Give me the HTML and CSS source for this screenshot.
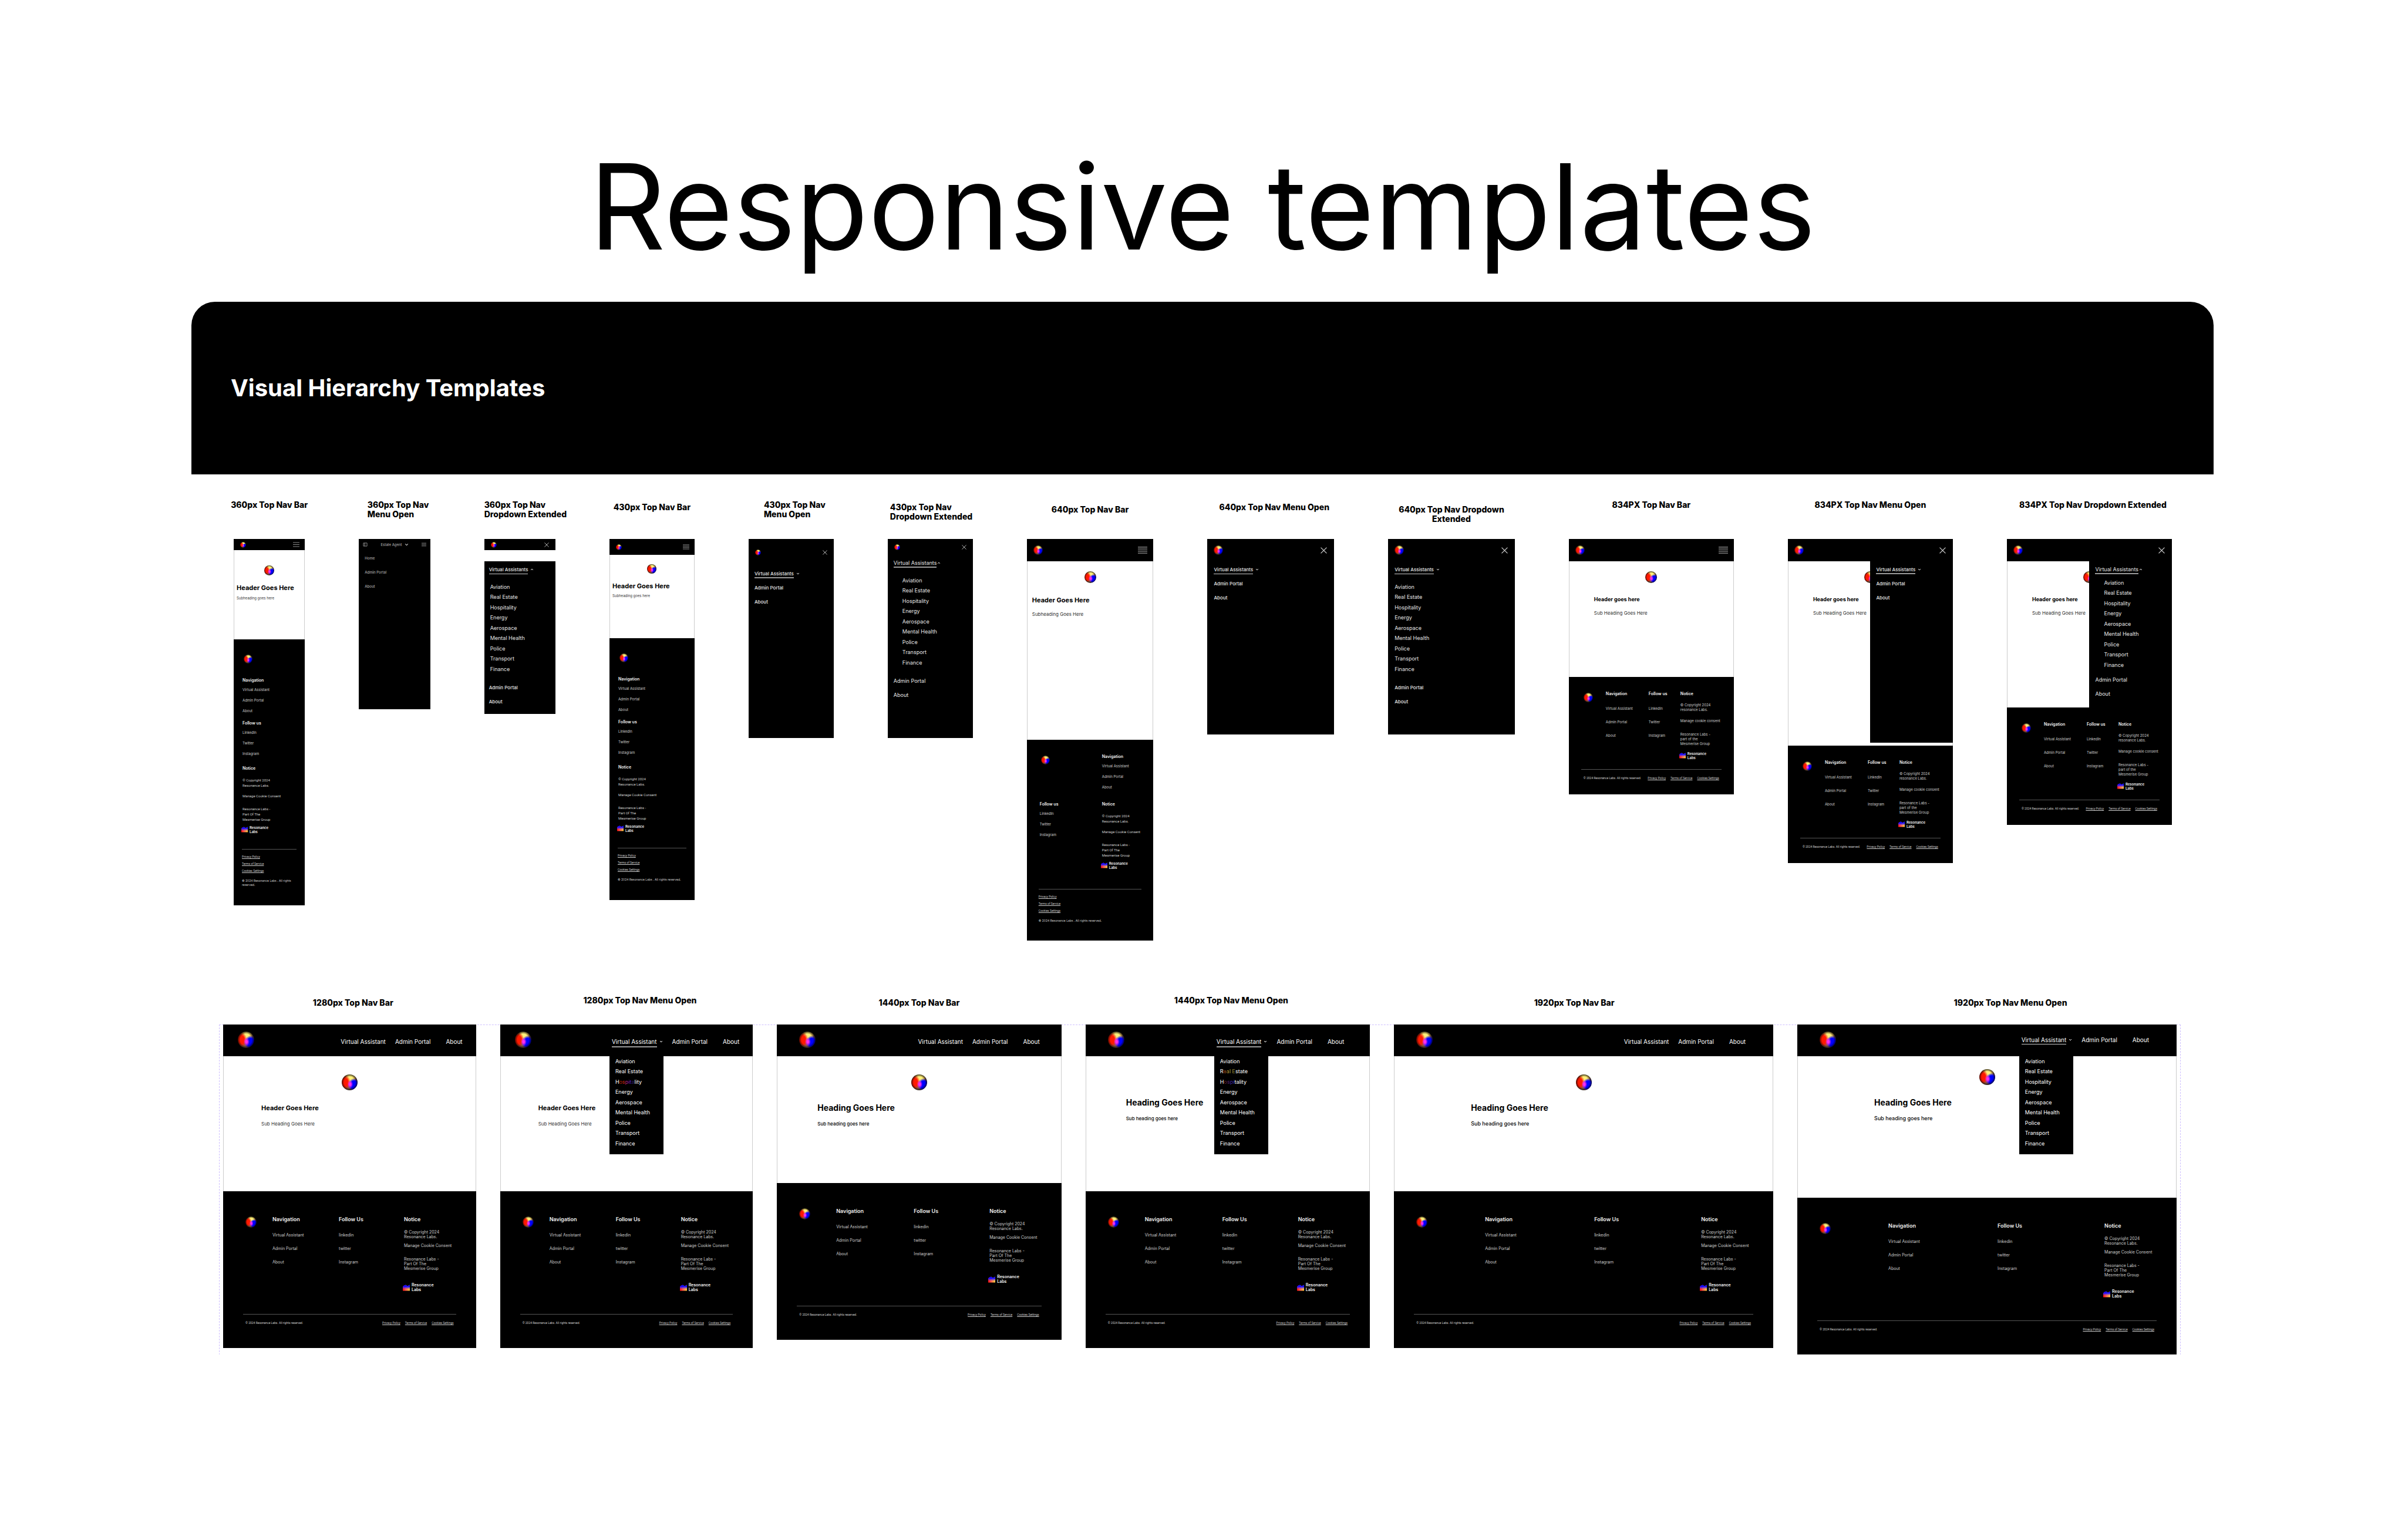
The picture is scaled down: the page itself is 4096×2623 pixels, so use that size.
FILE: index.html
```
<!DOCTYPE html>
<html lang="en">
<head>
<meta charset="utf-8">
<title>Responsive templates</title>
<meta name="viewport" content="width=device-width, initial-scale=1">
<link rel="stylesheet" href="styles.css">
</head>
<body>
<svg class="sprite" aria-hidden="true">
  <defs>
    <linearGradient id="mark-x" x1="0" x2="1" y1="0" y2="0"><stop offset="0" stop-color="#ff0a0a"/><stop offset=".4" stop-color="#ff5a4a"/><stop offset="1" stop-color="#ffd23c"/></linearGradient>
    <linearGradient id="mark-y" x1="0" x2="0" y1="0" y2="1"><stop offset="0" stop-color="#0000ff"/><stop offset=".3" stop-color="#1a10ff"/><stop offset=".75" stop-color="#6040ff" stop-opacity="0"/></linearGradient>
    <symbol id="mark" viewBox="0 0 12 10"><path fill="url(#mark-x)" d="M0 3l2-2 3-1 3 2 2-1 2-1v10H0z"/><path fill="url(#mark-y)" d="M0 3l2-2 3-1 3 2 2-1 2-1v10H0z"/></symbol>
    <symbol id="burger" viewBox="0 0 16 12"><path d="M0 1h16M0 6h16M0 11h16" stroke="currentColor" stroke-width="1.3"/></symbol>
    <symbol id="burger-dense" viewBox="0 0 16 12"><path d="M0 .8h16M0 4.2h16M0 7.7h16M0 11.2h16" stroke="currentColor" stroke-width="1.3"/></symbol>
    <symbol id="close" viewBox="0 0 10 10"><path d="M.5.5l9 9M9.5.5l-9 9" stroke="currentColor" fill="none"/></symbol>
    <symbol id="down" viewBox="0 0 6 6"><path d="M1 2l2 2 2-2" stroke="currentColor" fill="none"/></symbol>
    <symbol id="up" viewBox="0 0 6 6"><path d="M1 4l2-2 2 2" stroke="currentColor" fill="none"/></symbol>
    <symbol id="sidebar" viewBox="0 0 8 8"><path d="M.5 1h7v6h-7zM3 1v6" stroke="currentColor" fill="none"/></symbol>
  </defs>
</svg>

<h1 class="title">Responsive templates</h1>
<header class="banner"><h2>Visual Hierarchy Templates</h2></header>

<main>
<section class="row row--narrow">

  <figure class="mock w360">
    <figcaption><span>360px Top Nav Bar</span></figcaption>
    <div class="frame">
      <div class="bar"><i class="orb"></i><button class="icon" aria-label="Menu"><svg><use href="#burger"/></svg></button></div>
      <div class="hero"><i class="orb"></i><h3>Header Goes Here</h3><p>Subheading goes here</p></div>
      <footer class="foot foot--stack">
        <i class="orb"></i>
        <nav><h4>Navigation</h4><a href="#">Virtual Assistant</a><a href="#">Admin Portal</a><a href="#">About</a></nav>
        <nav><h4>Follow us</h4><a href="#">LinkedIn</a><a href="#">Twitter</a><a href="#">Instagram</a></nav>
        <div class="notice"><h4>Notice</h4><p>© Copyright 2024<br>Resonance Labs.</p><a href="#">Manage Cookie Consent</a><p class="group">Resonance Labs -<br>Part Of The<br>Mesmerise Group</p><div class="brand"><svg><use href="#mark"/></svg><b>Resonance<br>Labs</b></div></div>
        <div class="legal"><a href="#">Privacy Policy</a><a href="#">Terms of Service</a><a href="#">Cookies Settings</a><small>© 2024 Resonance Labs . All rights reserved.</small></div>
      </footer>
    </div>
  </figure>

  <figure class="mock w360">
    <figcaption class="in"><span>360px Top Nav<br>Menu Open</span></figcaption>
    <div class="frame frame--agent">
      <div class="bar"><button class="icon icon--small" aria-label="Sidebar"><svg><use href="#sidebar"/></svg></button><button class="picker">Estate Agent <svg><use href="#down"/></svg></button><button class="icon icon--small" aria-label="Menu"><svg><use href="#burger-dense"/></svg></button></div>
      <nav class="plain"><a href="#">Home</a><a href="#">Admin Portal</a><a href="#">About</a></nav>
    </div>
  </figure>

  <figure class="mock w360">
    <figcaption class="start"><span>360px Top Nav<br>Dropdown Extended</span></figcaption>
    <div class="frame frame--gap">
      <div class="bar"><i class="orb"></i><button class="icon icon--close" aria-label="Close"><svg><use href="#close"/></svg></button></div>
      <nav class="menu">
        <button class="toggle"><span>Virtual Assistants</span><svg><use href="#up"/></svg></button>
        <ul class="sub"><li><a href="#">Aviation</a></li><li><a href="#">Real Estate</a></li><li><a href="#">Hospitality</a></li><li><a href="#">Energy</a></li><li><a href="#">Aerospace</a></li><li><a href="#">Mental Health</a></li><li><a href="#">Police</a></li><li><a href="#">Transport</a></li><li><a href="#">Finance</a></li></ul>
        <a href="#">Admin Portal</a><a href="#">About</a>
      </nav>
    </div>
  </figure>

  <figure class="mock w430">
    <figcaption class="low"><span>430px Top Nav Bar</span></figcaption>
    <div class="frame">
      <div class="bar"><i class="orb"></i><button class="icon" aria-label="Menu"><svg><use href="#burger-dense"/></svg></button></div>
      <div class="hero"><i class="orb"></i><h3>Header Goes Here</h3><p>Subheading goes here</p></div>
      <footer class="foot foot--stack">
        <i class="orb"></i>
        <nav><h4>Navigation</h4><a href="#">Virtual Assistant</a><a href="#">Admin Portal</a><a href="#">About</a></nav>
        <nav><h4>Follow us</h4><a href="#">LinkedIn</a><a href="#">Twitter</a><a href="#">Instagram</a></nav>
        <div class="notice"><h4>Notice</h4><p>© Copyright 2024<br>Resonance Labs.</p><a href="#">Manage Cookie Consent</a><p class="group">Resonance Labs -<br>Part Of The<br>Mesmerise Group</p><div class="brand"><svg><use href="#mark"/></svg><b>Resonance<br>Labs</b></div></div>
        <div class="legal"><a href="#">Privacy Policy</a><a href="#">Terms of Service</a><a href="#">Cookies Settings</a><small>© 2024 Resonance Labs . All rights reserved.</small></div>
      </footer>
    </div>
  </figure>

  <figure class="mock w430">
    <figcaption class="in"><span>430px Top Nav<br>Menu Open</span></figcaption>
    <div class="frame frame--tallbar">
      <div class="bar"><i class="orb"></i><button class="icon icon--close" aria-label="Close"><svg><use href="#close"/></svg></button></div>
      <nav class="menu menu--thick">
        <button class="toggle"><span>Virtual Assistants</span><svg><use href="#down"/></svg></button>
        <a href="#">Admin Portal</a><a href="#">About</a>
      </nav>
    </div>
  </figure>

  <figure class="mock w430">
    <figcaption class="start low"><span>430px Top Nav<br>Dropdown Extended</span></figcaption>
    <div class="frame frame--menu">
      <div class="bar"><i class="orb"></i><button class="icon icon--close" aria-label="Close"><svg><use href="#close"/></svg></button></div>
      <nav class="menu menu--thick menu--large">
        <button class="toggle"><span>Virtual Assistants</span><svg><use href="#up"/></svg></button>
        <ul class="sub"><li><a href="#">Aviation</a></li><li><a href="#">Real Estate</a></li><li><a href="#">Hospitality</a></li><li><a href="#">Energy</a></li><li><a href="#">Aerospace</a></li><li><a href="#">Mental Health</a></li><li><a href="#">Police</a></li><li><a href="#">Transport</a></li><li><a href="#">Finance</a></li></ul>
        <a href="#">Admin Portal</a><a href="#">About</a>
      </nav>
    </div>
  </figure>

  <figure class="mock w640">
    <figcaption class="lower"><span>640px Top Nav Bar</span></figcaption>
    <div class="frame">
      <div class="bar"><i class="orb"></i><button class="icon" aria-label="Menu"><svg><use href="#burger-dense"/></svg></button></div>
      <div class="hero"><i class="orb"></i><h3>Header Goes Here</h3><p>Subheading Goes Here</p></div>
      <footer class="foot foot--pair">
        <i class="orb"></i>
        <nav><h4>Navigation</h4><a href="#">Virtual Assistant</a><a href="#">Admin Portal</a><a href="#">About</a></nav>
        <nav><h4>Follow us</h4><a href="#">LinkedIn</a><a href="#">Twitter</a><a href="#">Instagram</a></nav>
        <div class="notice"><h4>Notice</h4><p>© Copyright 2024<br>Resonance Labs.</p><a href="#">Manage Cookie Consent</a><p class="group">Resonance Labs -<br>Part Of The<br>Mesmerise Group</p><div class="brand"><svg><use href="#mark"/></svg><b>Resonance<br>Labs</b></div></div>
        <div class="legal"><a href="#">Privacy Policy</a><a href="#">Terms of Service</a><a href="#">Cookies Settings</a><small>© 2024 Resonance Labs . All rights reserved.</small></div>
      </footer>
    </div>
  </figure>

  <figure class="mock w640">
    <figcaption class="in low"><span>640px Top Nav Menu Open</span></figcaption>
    <div class="frame frame--menu">
      <div class="bar"><i class="orb"></i><button class="icon icon--close" aria-label="Close"><svg><use href="#close"/></svg></button></div>
      <nav class="menu">
        <button class="toggle"><span>Virtual Assistants</span><svg><use href="#down"/></svg></button>
        <a href="#">Admin Portal</a><a href="#">About</a>
      </nav>
    </div>
  </figure>

  <figure class="mock w640">
    <figcaption class="lower middle"><span>640px Top Nav Dropdown<br>Extended</span></figcaption>
    <div class="frame frame--menu">
      <div class="bar"><i class="orb"></i><button class="icon icon--close" aria-label="Close"><svg><use href="#close"/></svg></button></div>
      <nav class="menu">
        <button class="toggle"><span>Virtual Assistants</span><svg><use href="#down"/></svg></button>
        <ul class="sub"><li><a href="#">Aviation</a></li><li><a href="#">Real Estate</a></li><li><a href="#">Hospitality</a></li><li><a href="#">Energy</a></li><li><a href="#">Aerospace</a></li><li><a href="#">Mental Health</a></li><li><a href="#">Police</a></li><li><a href="#">Transport</a></li><li><a href="#">Finance</a></li></ul>
        <a href="#">Admin Portal</a><a href="#">About</a>
      </nav>
    </div>
  </figure>

  <figure class="mock w834">
    <figcaption><span>834PX Top Nav Bar</span></figcaption>
    <div class="frame">
      <div class="bar"><i class="orb"></i><button class="icon" aria-label="Menu"><svg><use href="#burger-dense"/></svg></button></div>
      <div class="hero"><i class="orb"></i><h3>Header goes here</h3><p>Sub Heading Goes Here</p></div>
      <footer class="foot foot--cols">
        <i class="orb"></i>
        <nav><h4>Navigation</h4><a href="#">Virtual Assistant</a><a href="#">Admin Portal</a><a href="#">About</a></nav>
        <nav><h4>Follow us</h4><a href="#">LinkedIn</a><a href="#">Twitter</a><a href="#">Instagram</a></nav>
        <div class="notice"><h4>Notice</h4><p>© Copyright 2024<br>resonance Labs.</p><a href="#">Manage cookie consent</a><p class="group">Resonance Labs -<br>part of the<br>Mesmerise Group</p><div class="brand"><svg><use href="#mark"/></svg><b>Resonance<br>Labs</b></div></div>
        <div class="legal"><small>© 2024 Resonance Labs. All rights reserved.</small><a href="#">Privacy Policy</a><a href="#">Terms of Service</a><a href="#">Cookies Settings</a></div>
      </footer>
    </div>
  </figure>

  <figure class="mock w834">
    <figcaption><span>834PX Top Nav Menu Open</span></figcaption>
    <div class="frame">
      <div class="bar"><i class="orb"></i><button class="icon icon--close" aria-label="Close"><svg><use href="#close"/></svg></button></div>
      <div class="hero hero--tall"><i class="orb"></i><h3>Header goes here</h3><p>Sub Heading Goes Here</p>
        <nav class="menu menu--thick panel">
          <button class="toggle"><span>Virtual Assistants</span><svg><use href="#down"/></svg></button>
          <a href="#">Admin Portal</a><a href="#">About</a>
        </nav>
      </div>
      <footer class="foot foot--cols">
        <i class="orb"></i>
        <nav><h4>Navigation</h4><a href="#">Virtual Assistant</a><a href="#">Admin Portal</a><a href="#">About</a></nav>
        <nav><h4>Follow us</h4><a href="#">LinkedIn</a><a href="#">Twitter</a><a href="#">Instagram</a></nav>
        <div class="notice"><h4>Notice</h4><p>© Copyright 2024<br>resonance Labs.</p><a href="#">Manage cookie consent</a><p class="group">Resonance Labs -<br>part of the<br>Mesmerise Group</p><div class="brand"><svg><use href="#mark"/></svg><b>Resonance<br>Labs</b></div></div>
        <div class="legal"><small>© 2024 Resonance Labs. All rights reserved.</small><a href="#">Privacy Policy</a><a href="#">Terms of Service</a><a href="#">Cookies Settings</a></div>
      </footer>
    </div>
  </figure>

  <figure class="mock w834">
    <figcaption class="in"><span>834PX Top Nav Dropdown Extended</span></figcaption>
    <div class="frame">
      <div class="bar"><i class="orb"></i><button class="icon icon--close" aria-label="Close"><svg><use href="#close"/></svg></button></div>
      <div class="hero hero--mid"><i class="orb"></i><h3>Header goes here</h3><p>Sub Heading Goes Here</p>
        <nav class="menu menu--thick menu--large panel">
          <button class="toggle"><span>Virtual Assistants</span><svg><use href="#up"/></svg></button>
          <ul class="sub"><li><a href="#">Aviation</a></li><li><a href="#">Real Estate</a></li><li><a href="#">Hospitality</a></li><li><a href="#">Energy</a></li><li><a href="#">Aerospace</a></li><li><a href="#">Mental Health</a></li><li><a href="#">Police</a></li><li><a href="#">Transport</a></li><li><a href="#">Finance</a></li></ul>
          <a href="#">Admin Portal</a><a href="#">About</a>
        </nav>
      </div>
      <footer class="foot foot--cols">
        <i class="orb"></i>
        <nav><h4>Navigation</h4><a href="#">Virtual Assistant</a><a href="#">Admin Portal</a><a href="#">About</a></nav>
        <nav><h4>Follow us</h4><a href="#">LinkedIn</a><a href="#">Twitter</a><a href="#">Instagram</a></nav>
        <div class="notice"><h4>Notice</h4><p>© Copyright 2024<br>resonance Labs.</p><a href="#">Manage cookie consent</a><p class="group">Resonance Labs -<br>part of the<br>Mesmerise Group</p><div class="brand"><svg><use href="#mark"/></svg><b>Resonance<br>Labs</b></div></div>
        <div class="legal"><small>© 2024 Resonance Labs. All rights reserved.</small><a href="#">Privacy Policy</a><a href="#">Terms of Service</a><a href="#">Cookies Settings</a></div>
      </footer>
    </div>
  </figure>
</section>

<section class="row row--wide">

  <figure class="mock w1280">
    <figcaption class="in low"><span>1280px Top Nav Bar</span></figcaption>
    <div class="frame">
      <div class="bar"><i class="orb"></i><nav class="links"><a href="#">Virtual Assistant</a><a href="#">Admin Portal</a><a href="#">About</a></nav></div>
      <div class="hero"><i class="orb"></i><h3>Header Goes Here</h3><p>Sub Heading Goes Here</p></div>
      <footer class="foot foot--cols">
        <i class="orb"></i>
        <nav><h4>Navigation</h4><a href="#">Virtual Assistant</a><a href="#">Admin Portal</a><a href="#">About</a></nav>
        <nav><h4>Follow Us</h4><a href="#">linkedin</a><a href="#">twitter</a><a href="#">Instagram</a></nav>
        <div class="notice"><h4>Notice</h4><p>© Copyright 2024<br>Resonance Labs.</p><a href="#">Manage Cookie Consent</a><p class="group">Resonance Labs -<br>Part Of The<br>Mesmerise Group</p><div class="brand"><svg><use href="#mark"/></svg><b>Resonance<br>Labs</b></div></div>
        <div class="legal"><small>© 2024 Resonance Labs. All rights reserved.</small><a href="#">Privacy Policy</a><a href="#">Terms of Service</a><a href="#">Cookies Settings</a></div>
      </footer>
    </div>
  </figure>

  <figure class="mock w1280">
    <figcaption class="shift"><span>1280px Top Nav Menu Open</span></figcaption>
    <div class="frame">
      <div class="bar"><i class="orb"></i><nav class="links">
        <div class="drop"><button class="toggle toggle--thick"><span>Virtual Assistant</span><svg><use href="#down"/></svg></button>
          <ul class="sub"><li><a href="#">Aviation</a></li><li><a href="#">Real Estate</a></li><li><a href="#">H<span class="glow">ospita</span>lity</a></li><li><a href="#">Energy</a></li><li><a href="#">Aerospace</a></li><li><a href="#">Mental Health</a></li><li><a href="#">Police</a></li><li><a href="#">Transport</a></li><li><a href="#">Finance</a></li></ul>
        </div><a href="#">Admin Portal</a><a href="#">About</a></nav></div>
      <div class="hero"><i class="orb"></i><h3>Header Goes Here</h3><p>Sub Heading Goes Here</p></div>
      <footer class="foot foot--cols">
        <i class="orb"></i>
        <nav><h4>Navigation</h4><a href="#">Virtual Assistant</a><a href="#">Admin Portal</a><a href="#">About</a></nav>
        <nav><h4>Follow Us</h4><a href="#">linkedin</a><a href="#">twitter</a><a href="#">Instagram</a></nav>
        <div class="notice"><h4>Notice</h4><p>© Copyright 2024<br>Resonance Labs.</p><a href="#">Manage Cookie Consent</a><p class="group">Resonance Labs -<br>Part Of The<br>Mesmerise Group</p><div class="brand"><svg><use href="#mark"/></svg><b>Resonance<br>Labs</b></div></div>
        <div class="legal"><small>© 2024 Resonance Labs. All rights reserved.</small><a href="#">Privacy Policy</a><a href="#">Terms of Service</a><a href="#">Cookies Settings</a></div>
      </footer>
    </div>
  </figure>

  <figure class="mock w1440">
    <figcaption class="low"><span>1440px Top Nav Bar</span></figcaption>
    <div class="frame">
      <div class="bar"><i class="orb"></i><nav class="links"><a href="#">Virtual Assistant</a><a href="#">Admin Portal</a><a href="#">About</a></nav></div>
      <div class="hero hero--short"><i class="orb"></i><h3>Heading Goes Here</h3><p>Sub heading goes here</p></div>
      <footer class="foot foot--cols">
        <i class="orb"></i>
        <nav><h4>Navigation</h4><a href="#">Virtual Assistant</a><a href="#">Admin Portal</a><a href="#">About</a></nav>
        <nav><h4>Follow Us</h4><a href="#">linkedin</a><a href="#">twitter</a><a href="#">Instagram</a></nav>
        <div class="notice"><h4>Notice</h4><p>© Copyright 2024<br>Resonance Labs.</p><a href="#">Manage Cookie Consent</a><p class="group">Resonance Labs -<br>Part Of The<br>Mesmerise Group</p><div class="brand"><svg><use href="#mark"/></svg><b>Resonance<br>Labs</b></div></div>
        <div class="legal"><small>© 2024 Resonance Labs. All rights reserved.</small><a href="#">Privacy Policy</a><a href="#">Terms of Service</a><a href="#">Cookies Settings</a></div>
      </footer>
    </div>
  </figure>

  <figure class="mock w1440">
    <figcaption class="in"><span>1440px Top Nav Menu Open</span></figcaption>
    <div class="frame">
      <div class="bar bar--inset"><i class="orb"></i><nav class="links">
        <div class="drop"><button class="toggle toggle--thick"><span>Virtual Assistant</span><svg><use href="#down"/></svg></button>
          <ul class="sub"><li><a href="#">Aviation</a></li><li><a href="#">R<span class="glow glow--warm">eal E</span>state</a></li><li><a href="#">H<span class="glow glow--dim">ospi</span>tality</a></li><li><a href="#">Energy</a></li><li><a href="#">Aerospace</a></li><li><a href="#">Mental Health</a></li><li><a href="#">Police</a></li><li><a href="#">Transport</a></li><li><a href="#">Finance</a></li></ul>
        </div><a href="#">Admin Portal</a><a href="#">About</a></nav></div>
      <div class="hero hero--raised"><i class="orb"></i><h3>Heading Goes Here</h3><p>Sub heading goes here</p></div>
      <footer class="foot foot--cols">
        <i class="orb"></i>
        <nav><h4>Navigation</h4><a href="#">Virtual Assistant</a><a href="#">Admin Portal</a><a href="#">About</a></nav>
        <nav><h4>Follow Us</h4><a href="#">linkedin</a><a href="#">twitter</a><a href="#">Instagram</a></nav>
        <div class="notice"><h4>Notice</h4><p>© Copyright 2024<br>Resonance Labs.</p><a href="#">Manage Cookie Consent</a><p class="group">Resonance Labs -<br>Part Of The<br>Mesmerise Group</p><div class="brand"><svg><use href="#mark"/></svg><b>Resonance<br>Labs</b></div></div>
        <div class="legal"><small>© 2024 Resonance Labs. All rights reserved.</small><a href="#">Privacy Policy</a><a href="#">Terms of Service</a><a href="#">Cookies Settings</a></div>
      </footer>
    </div>
  </figure>

  <figure class="mock w1920">
    <figcaption class="back low"><span>1920px Top Nav Bar</span></figcaption>
    <div class="frame">
      <div class="bar"><i class="orb"></i><nav class="links"><a href="#">Virtual Assistant</a><a href="#">Admin Portal</a><a href="#">About</a></nav></div>
      <div class="hero"><i class="orb"></i><h3>Heading Goes Here</h3><p>Sub heading goes here</p></div>
      <footer class="foot foot--cols">
        <i class="orb"></i>
        <nav><h4>Navigation</h4><a href="#">Virtual Assistant</a><a href="#">Admin Portal</a><a href="#">About</a></nav>
        <nav><h4>Follow Us</h4><a href="#">linkedin</a><a href="#">twitter</a><a href="#">Instagram</a></nav>
        <div class="notice"><h4>Notice</h4><p>© Copyright 2024<br>Resonance Labs.</p><a href="#">Manage Cookie Consent</a><p class="group">Resonance Labs -<br>Part Of The<br>Mesmerise Group</p><div class="brand"><svg><use href="#mark"/></svg><b>Resonance<br>Labs</b></div></div>
        <div class="legal"><small>© 2024 Resonance Labs. All rights reserved.</small><a href="#">Privacy Policy</a><a href="#">Terms of Service</a><a href="#">Cookies Settings</a></div>
      </footer>
    </div>
  </figure>

  <figure class="mock w1920">
    <figcaption class="far low"><span>1920px Top Nav Menu Open</span></figcaption>
    <div class="frame frame--highnav">
      <div class="bar"><i class="orb"></i><nav class="links">
        <div class="drop"><button class="toggle"><span>Virtual Assistant</span><svg><use href="#down"/></svg></button>
          <ul class="sub"><li><a href="#">Aviation</a></li><li><a href="#">Real Estate</a></li><li><a href="#">Hospitality</a></li><li><a href="#">Energy</a></li><li><a href="#">Aerospace</a></li><li><a href="#">Mental Health</a></li><li><a href="#">Police</a></li><li><a href="#">Transport</a></li><li><a href="#">Finance</a></li></ul>
        </div><a href="#">Admin Portal</a><a href="#">About</a></nav></div>
      <div class="hero hero--raised hero--tall"><i class="orb"></i><h3>Heading Goes Here</h3><p>Sub heading goes here</p></div>
      <footer class="foot foot--cols">
        <i class="orb"></i>
        <nav><h4>Navigation</h4><a href="#">Virtual Assistant</a><a href="#">Admin Portal</a><a href="#">About</a></nav>
        <nav><h4>Follow Us</h4><a href="#">linkedin</a><a href="#">twitter</a><a href="#">Instagram</a></nav>
        <div class="notice"><h4>Notice</h4><p>© Copyright 2024<br>Resonance Labs.</p><a href="#">Manage Cookie Consent</a><p class="group">Resonance Labs -<br>Part Of The<br>Mesmerise Group</p><div class="brand"><svg><use href="#mark"/></svg><b>Resonance<br>Labs</b></div></div>
        <div class="legal"><small>© 2024 Resonance Labs. All rights reserved.</small><a href="#">Privacy Policy</a><a href="#">Terms of Service</a><a href="#">Cookies Settings</a></div>
      </footer>
    </div>
  </figure>
</section>
</main>
</body>
</html>
```
FILE: styles.css
```
* { box-sizing: border-box; margin: 0; padding: 0; }

body {
  background: #fff;
  color: #000;
  font-family: Inter, "Liberation Sans", sans-serif;
  font-optical-sizing: none;
  padding-top: 252px;
}

a { color: inherit; text-decoration: none; }
button { background: none; border: 0; color: inherit; font: inherit; font-optical-sizing: none; }
ul { list-style: none; }
.sprite { position: absolute; width: 0; height: 0; }

.title {
  font-size: 202px;
  font-weight: 400;
  line-height: 200px;
  text-align: center;
}

.banner {
  background: #000;
  border-radius: 40px 40px 0 0;
  color: #fff;
  display: flex;
  align-items: center;
  height: 294px;
  margin: 62px 326px 0;
  padding-left: 67px;
}
.banner h2 { font-size: 40px; font-weight: 700; line-height: 48px; }

/* Rows of artboards: each one's share of the width is its breakpoint */
.row { display: flex; align-items: flex-start; }
.row--narrow { gap: 92px; padding: 44px 397px 0 398px; }
.row--wide { gap: 41px; margin: 94px 382px 0 373px; padding: 0 7px; position: relative; }
.row--wide::before {
  content: "";
  border: 1px dashed #cfc0ff;
  inset: 49px 0 -1px 0;
  position: absolute;
}

.mock { flex: 1 1 0; min-width: 0; position: relative; }
.w360 { flex-grow: 360; }
.w430 { flex-grow: 430; }
.w640 { flex-grow: 640; }
.w834 { flex-grow: 834; }
.w1280 { flex-grow: 1280; }
.w1440 { flex-grow: 1440; }
.w1920 { flex-grow: 1920; }

figcaption {
  display: flex;
  justify-content: center;
  font-size: 14px;
  font-weight: 800;
  height: 66px;
  line-height: 16px;
  white-space: nowrap;
}
.row--wide figcaption { height: 49px; }
.start { justify-content: flex-start; }
.middle { text-align: center; }
.low { padding-top: 4px; }
.lower { padding-top: 8px; }
.in { padding-left: 12px; }
.shift { padding-left: 46px; }
.far { padding-left: 80px; }
.back { padding-right: 32px; }
.start.low { padding-left: 4px; }

.frame { background: #000; color: #e6e6e6; font-size: 8px; }

.orb {
  background:
    radial-gradient(ellipse 50% 50% at 50% 50%, transparent 70%, rgba(0, 0, 0, .7) 100%),
    radial-gradient(ellipse 18% 26% at 53% 62%, #ff30f0 30%, transparent),
    radial-gradient(ellipse 38% 42% at 78% 66%, #0000ff 60%, transparent),
    radial-gradient(ellipse 36% 46% at 20% 50%, #ff1a00 55%, transparent),
    radial-gradient(ellipse 36% 46% at 55% 24%, #fff27a 35%, #e0b850 75%, transparent),
    #8a5a40;
  border-radius: 50%;
  display: block;
  flex: none;
  height: var(--orb);
  width: var(--orb);
}

/* Top bar */
.bar {
  --orb: 10px;
  align-items: center;
  display: flex;
  height: var(--bar);
  justify-content: space-between;
  padding: 0 9px 0 11px;
}
.icon { color: #999; display: flex; }
.icon svg { height: var(--icon-h); width: var(--icon-w); }
.icon--close { color: #ddd; margin-right: 2px; }
.icon--close svg { height: var(--close); width: var(--close); }
.w360 { --bar: 19px; --icon-w: 11px; --icon-h: 9px; --close: 8px; }
.w430 { --bar: 27px; --icon-w: 11px; --icon-h: 9px; --close: 8px; }
.w640, .w834 { --bar: 38px; --icon-w: 16px; --icon-h: 12px; --close: 11px; }
.w640 .bar, .w834 .bar { --orb: 16px; padding-right: 10px; }
.icon--small svg { height: 7px; width: 8px; }

/* White hero area */
.hero {
  --orb: 27px;
  background: #fff;
  border: solid #ccc;
  border-width: 0 1px;
  color: #000;
  min-height: var(--hero);
  padding-left: var(--hero-x);
  padding-top: var(--hero-y);
  position: relative;
}
.hero .orb { margin-left: calc(50% - (var(--orb) + var(--hero-x)) / 2); }
.hero h3 { font-size: 11px; line-height: 14px; margin-top: var(--title-gap); }
.hero p { color: #333; font-size: 8px; line-height: 10px; margin-top: var(--text-gap); }
.w360 .hero { --orb: 17px; --hero: 152px; --hero-x: 4px; --hero-y: 26px; --title-gap: 14px; --text-gap: 6px; }
.w430 .hero { --orb: 16px; --hero: 142px; --hero-x: 4px; --hero-y: 16px; --title-gap: 14px; --text-gap: 5px; }
.w360 .hero p, .w430 .hero p { font-size: 6px; }
.w640 .hero { --orb: 20px; --hero: 304px; --hero-x: 8px; --hero-y: 17px; --title-gap: 22px; --text-gap: 12px; }
.w834 .hero { --orb: 20px; --hero: 197px; --hero-x: 42px; --hero-y: 17px; --title-gap: 21px; --text-gap: 11px; }
.w834 .hero--tall { --hero: 314px; }
.w834 .hero--mid { --hero: 249px; }
.w834 .hero h3 { font-size: 9px; }

/* Open menus */
.menu, .plain { display: flex; flex-direction: column; align-items: flex-start; font-weight: 500; line-height: 12px; }
.menu { font-size: 8px; padding: 8px 0 0 10px; }
.menu > a { margin-top: 12px; }
.menu .toggle + a { margin-top: 10px; }
.toggle { display: flex; gap: 4px; line-height: 12px; }
.toggle svg { height: 6px; margin-top: 3px; width: 6px; }
.toggle span { border-bottom: 1px solid #ccc; padding-bottom: 1px; }
.menu--thick .toggle span { border-bottom: 2px solid #999; padding-bottom: 0; }
.menu--large { font-size: 9px; font-weight: 400; }
.menu--large .toggle { gap: 1px; }
.sub {
  display: grid;
  font-size: 9px;
  font-weight: 400;
  grid-auto-rows: 1fr;
  height: 157px;
  line-height: 17px;
}
.menu .sub { margin-top: 13px; }
.menu .sub + a { margin-top: 17px; }
.menu--large .sub { padding-left: 15px; }
.frame--agent { min-height: 290px; }
.frame--agent .bar { padding: 0 7px; }
.picker { color: #bbb; display: flex; font-size: 6px; gap: 4px; line-height: 8px; }
.picker svg { height: 7px; width: 7px; }
.plain { color: #aaa; font-size: 6px; gap: 12px; padding: 8px 0 0 10px; }
.frame--gap { min-height: 298px; }
.frame--gap .bar { border-bottom: 19px solid #fff; box-sizing: content-box; }
.w360 .menu { padding-left: 8px; }
.w640 .menu { padding-left: 11px; }
.w360 .sub { padding-left: 2px; }
.frame--tallbar, .w430 .frame--menu { min-height: 339px; }
.frame--tallbar { --bar: 45px; }
.w640 .frame--menu { min-height: 333px; }
.panel {
  background: #000;
  bottom: 0;
  color: #e6e6e6;
  left: 50%;
  position: absolute;
  right: -1px;
  top: 0;
}
.hero--tall .panel { bottom: 5px; }
.panel .sub { margin-top: 6px; }
.panel .sub + a { margin-top: 11px; }

/* Footers */
.foot {
  --copy-gap: 8px;
  --manage-gap: 9px;
  --group-gap: 13px;
  --logo-gap: 6px;
  --orb: 15px;
  color: #ccc;
  font-size: 6px;
}
.foot h4 { color: #f0f0f0; font-size: 7px; font-weight: 600; line-height: 14px; }
.foot nav a { display: block; line-height: var(--item, 18px); }
.notice { line-height: var(--copy, 9px); white-space: nowrap; }
.notice p { margin-top: var(--copy-gap); }
.notice > a { display: block; margin-top: var(--manage-gap); }
.notice .group { margin-top: var(--group-gap); }
.brand { align-items: center; display: flex; gap: 3px; line-height: 7px; margin: var(--logo-gap) 0 0 -2px; }
.brand b { color: #f0f0f0; font-weight: 600; }
.brand svg { height: 10px; width: 11px; }
.legal { border-top: 1px solid #555; font-family: Roboto, sans-serif; font-size: 5px; }
.legal a { text-decoration: underline; }

.foot--stack { padding: 26px 14px 31px; }
.foot--stack > .orb { margin: 0 0 22px 3px; }
.foot--stack nav, .foot--stack .notice { padding-left: 1px; }
.foot--stack nav + nav { margin-top: 5px; }
.foot--stack .notice { margin-top: 9px; }
.foot--stack .legal { margin-top: 26px; }
.foot--stack .notice, .foot--pair .notice { font-family: Roboto, sans-serif; }
.foot--stack h4, .foot--pair h4, .foot--stack .brand, .foot--pair .brand { font-family: Inter, sans-serif; }
.foot--stack .legal, .foot--pair .legal { padding-top: 6px; }
.foot--stack .legal a, .foot--pair .legal a { display: block; line-height: 12px; }
.foot--stack small, .foot--pair small { display: block; font-family: Inter, sans-serif; font-size: 5px; line-height: 7px; margin-top: 8px; }

.foot--pair { display: grid; grid-template-columns: 106px 1fr; padding: 22px 20px 30px 22px; row-gap: 13px; }
.foot--pair > .orb { margin: 5px 0 0 2px; }
.foot--pair .legal { grid-column: 1 / -1; margin: 20px 0 0 -2px; }

.foot--cols {
  --item: 23px;
  --copy: 8px;
  display: grid;
  padding: 22px 21px 24px 25px;
}
.foot--cols > .orb { margin-top: 5px; }
.foot--cols nav h4 { margin-bottom: 6px; }
.foot--cols .legal {
  display: flex;
  gap: 8px;
  grid-column: 1 / -1;
  line-height: 8px;
  margin: 16px 0 0 -4px;
  padding: 10px 4px 0;
  white-space: nowrap;
}
.foot--cols small { font-size: 5px; margin-right: auto; }
.w834 .foot {
  --orb: 16px;
  --manage-gap: 11px;
  --group-gap: 15px;
  --logo-gap: 9px;
  grid-template-columns: 38px 73px 54px 1fr;
}

/* Desktop widths */
.row--wide .bar { --orb: 28px; --bar: 54px; align-items: flex-start; padding-top: 12px; }
.row--wide .links { color: #fff; display: flex; font-size: 10px; gap: 26px; line-height: 12px; margin-top: 11px; }
.links > a:first-child { margin-right: -10px; }
.drop { margin-right: -10px; position: relative; }
.toggle--thick span { border-bottom: 2px solid #999; padding-bottom: 2px; }
.drop .toggle svg { margin-right: -4px; }
.drop .toggle { margin-right: 4px; }
.drop .sub {
  background: #000;
  height: 167px;
  left: -4px;
  padding: 0 0 10px 10px;
  position: absolute;
  top: 31px;
  width: 92px;
  z-index: 1;
}
.row--wide .frame--highnav .links { margin-top: 8px; }
.frame--highnav .drop .sub { top: 34px; }

.row--wide .hero { --hero: 230px; --hero-y: 31px; --title-gap: 16px; --text-gap: 8px; }
.row--wide .hero h3 { font-size: 14px; line-height: 28px; }
.row--wide .hero--raised { --hero-y: 22px; }
.row--wide .hero--short { --hero: 216px; }
.row--wide .hero--tall { --hero: 241px; }
.row--wide .w1280 h3 { font-size: 11px; }
.w1280 .bar { padding-left: 25px; padding-right: 23px; }
.w1440 .bar { padding-left: 38px; padding-right: 37px; }
.w1440 .bar--inset { padding-right: 44px; }
.w1920 .bar { padding-left: 38px; padding-right: 47px; }
.w1280 .hero { --hero-x: 64px; }
.w1440 .hero { --hero-x: 68px; }
.w1920 .hero { --hero-x: 130px; }
.w1440 .hero p, .w1920 .hero p { color: #000; font-weight: 500; }
.w1920 .hero p { font-size: 9px; }

.row--wide .foot {
  --orb: 19px;
  --copy-gap: 11px;
  --manage-gap: 7px;
  --group-gap: 15px;
  --logo-gap: 20px;
  font-size: 7px;
  padding: 41px 34px 39px 38px;
}
.row--wide .foot > .orb { margin-top: 2px; }
.row--wide .foot h4 { font-size: 9px; }
.row--wide .foot nav h4 { margin-bottom: 8px; }
.row--wide .brand { line-height: 8px; }
.row--wide .brand svg { height: 11px; width: 12px; }
.row--wide .legal { margin-top: 37px; }
.w1280 .foot { grid-template-columns: 46px 113px 111px 1fr; }
.w1440 .foot { grid-template-columns: 63px 132px 129px 1fr; }
.w1920 .foot { grid-template-columns: 117px 186px 182px 1fr; }

.glow {
  background: linear-gradient(90deg, #d02000, #e02a10 30%, #c020d0 55%, #4020c0 75%, #222 100%);
  background-clip: text;
  color: transparent;
}
.glow--warm { background-image: linear-gradient(90deg, #a03010, #c8c040 50%, #8a7a30 100%); }
.glow--dim { background-image: linear-gradient(90deg, #802010, #4020a0 60%, #3a30e0 100%); }
```
